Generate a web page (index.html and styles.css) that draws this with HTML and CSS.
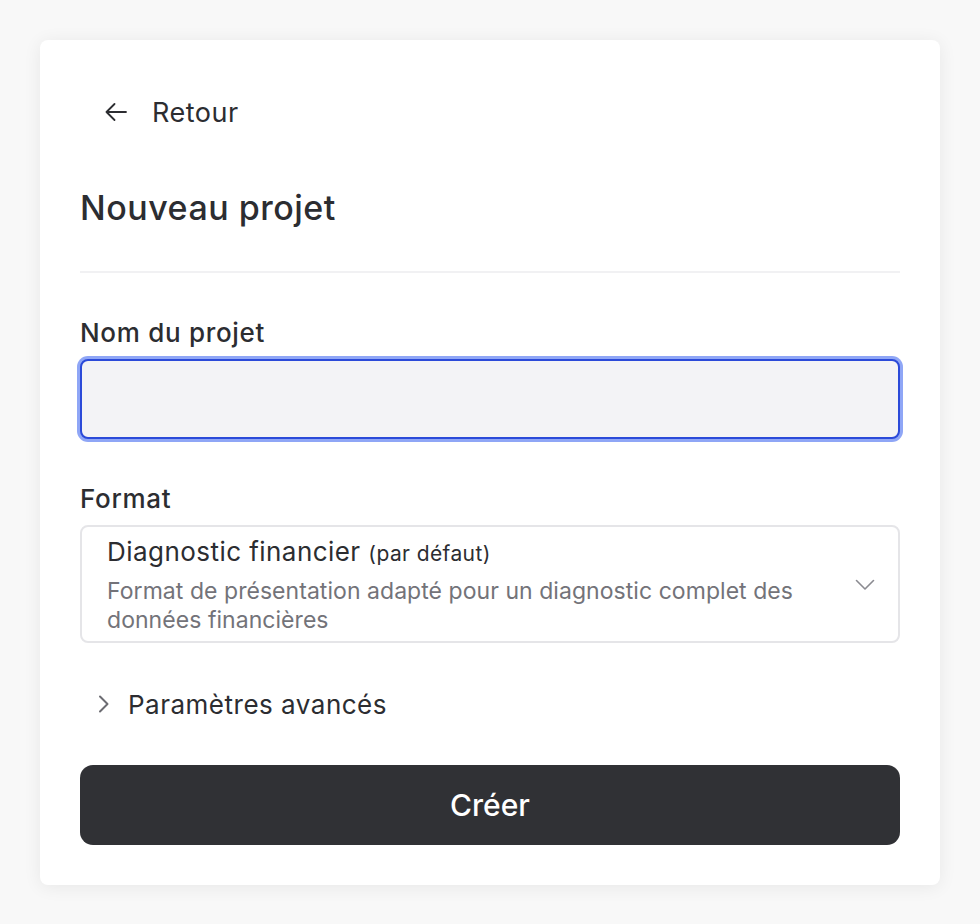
FILE: index.html
```html
<!DOCTYPE html>
<html lang="fr">
<head>
<meta charset="utf-8">
<title>Nouveau projet</title>
<link rel="stylesheet" href="styles.css">
</head>
<body>
<main class="card">
  <a class="back" href="#">
    <svg class="back-icon" width="22" height="18" viewBox="0 0 22 18" fill="none" stroke="currentColor" stroke-width="1.8" stroke-linecap="round" stroke-linejoin="round"><path d="M21 9H1.5M9.5 1L1.5 9l8 8"/></svg>
    <span>Retour</span>
  </a>
  <h1 class="title">Nouveau projet</h1>
  <div class="divider"></div>
  <label class="label" for="name">Nom du projet</label>
  <input class="input" id="name" type="text">
  <div class="label label-format">Format</div>
  <div class="select">
    <div class="select-text">
      <div class="select-title">Diagnostic financier <span class="select-default">(par défaut)</span></div>
      <div class="select-desc">Format de présentation adapté pour un diagnostic complet des données financières</div>
    </div>
    <svg class="select-chevron" width="20" height="12" viewBox="0 0 20 12" fill="none" stroke="currentColor" stroke-width="1.6" stroke-linecap="round" stroke-linejoin="round"><path d="M1.5 1.5L10 10l8.5-8.5"/></svg>
  </div>
  <div class="advanced">
    <svg class="advanced-chevron" width="12" height="18" viewBox="0 0 12 18" fill="none" stroke="currentColor" stroke-width="2" stroke-linecap="round" stroke-linejoin="round"><path d="M2 1.5L9.5 9 2 16.5"/></svg>
    <span>Paramètres avancés</span>
  </div>
  <button class="submit" type="button">Créer</button>
</main>
</body>
</html>
```

FILE: styles.css
```css
* { box-sizing: border-box; }
html, body { margin: 0; }
body {
  background: #f8f8f8;
  padding: 40px;
  font-family: Inter, "Noto Sans", "Liberation Sans", sans-serif;
  color: #2c2d31;
}
.card {
  background: #ffffff;
  border-radius: 8px;
  box-shadow: 0 2px 18px rgba(0,0,0,0.07);
  padding: 40px;
  display: flex;
  flex-direction: column;
}
.back {
  display: flex;
  align-items: center;
  height: 64px;
  padding-left: 25px;
  gap: 25px;
  color: #2c2d31;
  text-decoration: none;
  font-size: 27px;
  letter-spacing: 0.5px;
  font-weight: 400;
}
.back-icon { display: block; }
.title {
  margin: 40px 0 0;
  font-size: 34px;
  line-height: 48px;
  letter-spacing: 0.5px;
  font-weight: 500;
}
.divider {
  margin-top: 39px;
  height: 2px;
  background: #f1f1f3;
}
.label {
  display: block;
  margin-top: 42px;
  font-size: 26px;
  line-height: 36px;
  letter-spacing: 0.7px;
  font-weight: 500;
}
.input {
  margin-top: 8px;
  height: 80px;
  width: 100%;
  background: #f3f3f6;
  border: 2px solid #2b4ad9;
  border-radius: 8px;
  box-shadow: 0 0 0 3px #8fa6f6;
  outline: none;
  font: inherit;
  font-size: 26px;
  padding: 0 24px;
}
.label-format { margin-top: 42px; }
.select {
  margin-top: 8px;
  border: 2px solid #e5e5e8;
  border-radius: 8px;
  padding: 7px 23px 6px 25px;
  display: flex;
  align-items: center;
  gap: 20px;
}
.select-text { flex: 1; }
.select-title {
  font-size: 26px;
  line-height: 36px;
  letter-spacing: 0.45px;
}
.select-default { font-size: 21px; letter-spacing: 0.4px; }
.select-desc {
  margin-top: 5px;
  font-size: 23px;
  line-height: 29px;
  letter-spacing: 0.05px;
  color: #737379;
}
.select-chevron { color: #8b8b91; flex: none; }
.advanced {
  margin-top: 39px;
  height: 44px;
  display: flex;
  align-items: center;
  gap: 18px;
  padding-left: 18px;
  font-size: 26px;
  letter-spacing: 0.5px;
}
.advanced-chevron { color: #6c6c72; }
.submit {
  margin-top: 39px;
  height: 80px;
  border: none;
  border-radius: 13px;
  background: #303135;
  color: #ffffff;
  font: inherit;
  font-size: 30px;
  font-weight: 500;
}
```
